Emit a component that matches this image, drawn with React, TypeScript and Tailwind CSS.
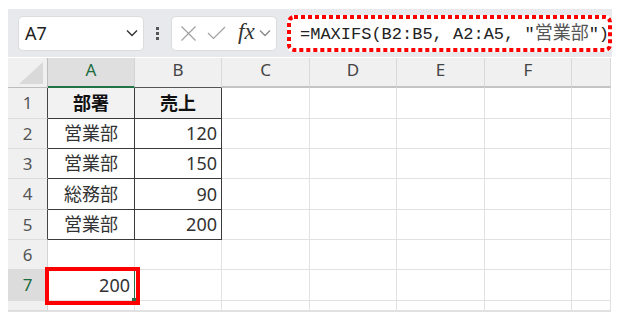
import React from "react";

const cols = ["", "A", "B", "C", "D", "E", "F", ""];
const font = { fontFamily: '"Noto Sans", "Noto Sans CJK JP", sans-serif' };

type Cell = { text?: string; align?: "left" | "center" | "right"; bold?: boolean; table?: boolean; head?: boolean };

const data: Record<number, Cell[]> = {
  1: [{ text: "部署", align: "center", bold: true, table: true, head: true }, { text: "売上", align: "center", bold: true, table: true, head: true }],
  2: [{ text: "営業部", align: "center", table: true }, { text: "120", align: "right", table: true }],
  3: [{ text: "営業部", align: "center", table: true }, { text: "150", align: "right", table: true }],
  4: [{ text: "総務部", align: "center", table: true }, { text: "90", align: "right", table: true }],
  5: [{ text: "営業部", align: "center", table: true }, { text: "200", align: "right", table: true }],
  7: [{ text: "200", align: "right" }, {}],
};

function Chevron({ color = "#444" }: { color?: string }) {
  return (
    <svg width="12" height="8" viewBox="0 0 12 8">
      <path d="M1 1.5 L6 6.5 L11 1.5" fill="none" stroke={color} strokeWidth="1.4" />
    </svg>
  );
}

export default function App() {
  const rowHeights = [31, 30, 30, 31, 30, 30, 31, 10];
  return (
    <div className="relative w-[621px] h-[324px] bg-white overflow-hidden" style={font}>
      {/* toolbar */}
      <div className="ml-[8px] mt-[9px] w-[604px] h-[48px] bg-[#e8e9ec] flex items-center pl-[10px]">
        <div className="w-[126px] h-[35px] bg-white rounded-[5px] border border-[#dcdcdc] flex items-center justify-between pl-[6px] pr-[5px]">
          <span className="text-[18px] text-[#222]">A7</span>
          <Chevron color="#333" />
        </div>
        <div className="w-[27px] flex flex-col items-center gap-[2px]">
          <div className="w-[3px] h-[3px] bg-[#555]" />
          <div className="w-[3px] h-[3px] bg-[#555]" />
          <div className="w-[3px] h-[3px] bg-[#555]" />
        </div>
        <div className="w-[106px] h-[35px] bg-white rounded-[5px] border border-[#dcdcdc] flex items-center pl-[8px]">
          <svg width="17" height="17" viewBox="0 0 17 17">
            <path d="M1.5 1.5 L15.5 15.5 M15.5 1.5 L1.5 15.5" stroke="#a0a0a0" strokeWidth="1.2" />
          </svg>
          <svg className="ml-[10px]" width="19" height="14" viewBox="0 0 19 14">
            <path d="M1 7 L6.5 12.5 L18 1" fill="none" stroke="#a0a0a0" strokeWidth="1.2" />
          </svg>
          <span
            className="ml-[12px] italic text-[23px] leading-none text-[#333] -mt-[3px]"
            style={{ fontFamily: '"Liberation Serif", "DejaVu Serif", serif' }}
          >
            fx
          </span>
          <div className="ml-[4px]">
            <Chevron color="#8a8a8a" />
          </div>
        </div>
        <div className="relative ml-[10px] flex-1 h-[37px] bg-white rounded-[6px] flex items-center pl-[13px]">
          <span
            className="text-[17px] text-[#222] whitespace-nowrap"
            style={{ fontFamily: '"Liberation Mono", "Noto Sans CJK JP", monospace' }}
          >
            =MAXIFS(B2:B5, A2:A5, "
            <span className="text-[#555]" style={{ fontFamily: '"Noto Sans CJK JP", sans-serif', fontSize: 18 }}>
              営業部
            </span>
            ")
          </span>
          <svg className="absolute inset-0" width="325" height="37" viewBox="0 0 325 37">
            <rect x="2" y="2" width="321" height="33" rx="5" fill="none" stroke="#ff0000" strokeWidth="4" strokeDasharray="4 3" />
          </svg>
        </div>
      </div>

      {/* grid */}
      <div className="relative ml-[8px] mt-[1px] w-[603px] grid grid-cols-[40px_87px_87px_88px_87px_88px_87px_39px] grid-rows-[30px_31px_30px_30px_31px_30px_30px_31px_10px] border-r border-b border-[#e1e1e1]">
        {cols.map((c, i) => {
          if (i === 0)
            return (
              <div key={i} className="relative bg-[#f0f0f0] border-r border-b border-[#bdbdbd]">
                <svg className="absolute right-[4px] bottom-[3px]" width="24" height="22" viewBox="0 0 24 22">
                  <path d="M24 0 L24 22 L0 22 Z" fill="#d9d9d9" />
                </svg>
              </div>
            );
          const sel = c === "A";
          return (
            <div
              key={i}
              className={
                sel
                  ? "bg-[#dfdfdf] border-r border-[#d4d4d4] border-b-2 border-b-[#217346] flex items-center justify-center text-[17px] text-[#1e6b3f] pb-[5px]"
                  : c === "B"
                  ? "bg-[#f0f0f0] border-r border-[#d9d9d9] border-b border-b-[#555] flex items-center justify-center text-[17px] text-[#444] pb-[5px]"
                  : "bg-[#f0f0f0] border-r border-[#d9d9d9] border-b-2 border-b-[#c4c4c4] flex items-center justify-center text-[17px] text-[#444] pb-[5px]"
              }
            >
              {c}
            </div>
          );
        })}
        {rowHeights.map((_, ri) => {
          const r = ri + 1;
          const isRow = r <= 7;
          const cells = data[r] || [];
          const inTable = r <= 5;
          return (
            <React.Fragment key={r}>
              <div
                className={
                  (r === 7 ? "bg-[#dcdcdc] text-[#1e6b3f] " : "bg-[#f0f0f0] text-[#555] ") +
                  (inTable ? "border-r border-r-[#444] " : "border-r border-r-[#d4d4d4] ") +
                  "border-b border-b-[#dcdcdc] flex items-center justify-center text-[17px]"
                }
              >
                {isRow ? r : ""}
              </div>
              {Array.from({ length: 7 }).map((__, ci) => {
                const cell = cells[ci] || {};
                const table = inTable && ci < 2;
                const align =
                  cell.align === "right" ? "justify-end pr-[4px]" : cell.align === "center" ? "justify-center" : "justify-start";
                return (
                  <div
                    key={ci}
                    className={
                      (table ? "border-r border-b border-[#3a3a3a] " : "border-r border-b border-[#e1e1e1] ") +
                      (cell.head ? "bg-[#f2f2f2] font-bold text-[#111] text-[18px] " : "text-[#333] text-[18px] ") +
                      (r === 7 && ci === 0 ? "border-r-[#217346] relative " : "") +
                      "flex items-center " +
                      align
                    }
                  >
                    {cell.text}
                    {r === 7 && ci === 0 && (
                      <div className="absolute right-[-3px] bottom-[-3px] w-[5px] h-[5px] bg-[#217346]" />
                    )}
                  </div>
                );
              })}
            </React.Fragment>
          );
        })}
        <div className="absolute left-[37px] top-[209px] w-[95px] h-[38px] border-4 border-[#ff0000]" />
      </div>
    </div>
  );
}
